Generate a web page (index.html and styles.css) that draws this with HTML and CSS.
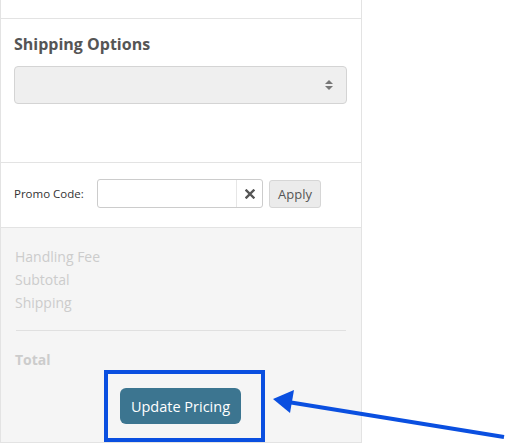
FILE: index.html
```html
<!DOCTYPE html>
<html>
<head>
<meta charset="utf-8">
<link rel="stylesheet" href="styles.css">
</head>
<body>
<div class="cart">
  <div class="sec sec-top"></div>
  <div class="sec sec-ship">
    <h3 class="title">Shipping Options</h3>
    <div class="select">
      <svg class="caret" width="8" height="12" viewBox="0 0 8 12"><path d="M0 5 L4 1 L8 5 Z M0 7 L8 7 L4 11 Z" fill="#777"/></svg>
    </div>
  </div>
  <div class="sec sec-promo">
    <span class="promo-label">Promo Code:</span>
    <div class="input-group">
      <div class="input"></div>
      <div class="clear"><svg width="10" height="10" viewBox="0 0 10 10"><path d="M1.5 1.5 L8.5 8.5 M8.5 1.5 L1.5 8.5" stroke="#555" stroke-width="2.4" stroke-linecap="square"/></svg></div>
    </div>
    <button class="apply">Apply</button>
  </div>
  <div class="sec sec-totals">
    <div class="line">Handling Fee</div>
    <div class="line">Subtotal</div>
    <div class="line">Shipping</div>
    <div class="rule"></div>
    <div class="line total">Total</div>
    <div class="btn-row">
      <div class="highlight">
        <button class="update">Update Pricing</button>
      </div>
    </div>
  </div>
</div>
<svg class="arrow" width="506" height="444" viewBox="0 0 506 444">
  <line x1="504" y1="437" x2="288" y2="402" stroke="#0a4fe0" stroke-width="4"/>
  <path d="M273 399 L294 390 L290 413 Z" fill="#0a4fe0"/>
</svg>
</body>
</html>
```
FILE: styles.css
```css
* { box-sizing: border-box; }
html, body { margin: 0; padding: 0; background: #fff; }
body { font-family: "Open Sans", "Liberation Sans", sans-serif; width: 506px; height: 444px; overflow: hidden; position: relative; }
.cart { width: 362px; border-left: 1px solid #e3e3e3; border-right: 1px solid #e3e3e3; border-bottom: 1px solid #e3e3e3; }
.sec { border-bottom: 1px solid #e3e3e3; }
.sec-top { height: 19px; }
.sec-ship { height: 144px; padding: 14px 14px 0 13px; }
.title { margin: 0; font-size: 16px; font-weight: 700; color: #555; line-height: 22px; }
.select { margin-top: 11px; height: 38px; background: #efefef; border: 1px solid #d4d4d4; border-radius: 4px; display: flex; align-items: center; justify-content: flex-end; padding-right: 13px; }
.sec-promo { height: 65px; padding: 0 13px 3px 13px; display: flex; align-items: center; }
.promo-label { font-size: 11.5px; color: #333; width: 83px; }
.input-group { display: flex; width: 166px; height: 29px; border: 1px solid #ccc; border-radius: 3px; background: #fff; }
.input { flex: 1; }
.clear { width: 26px; border-left: 1px solid #e6e6e6; display: flex; align-items: center; justify-content: center; }
.apply { margin-left: 6px; height: 28px; width: 52px; padding: 0; font-family: inherit; font-size: 13px; color: #555; background: #ebebeb; border: 1px solid #d6d6d6; border-radius: 3px; }
.sec-totals { background: #f5f5f5; height: 214px; padding: 17px 14px 0 14px; border-bottom: none; }
.line { font-size: 14px; line-height: 23px; color: #ccc; }
.rule { height: 1px; background: #e0e0e0; margin: 16px 1px 17px 1px; }
.total { font-weight: 700; }
.btn-row { display: flex; justify-content: flex-start; padding-left: 89px; margin-top: -1px; }
.highlight { border: 4px solid #0a4fe0; width: 161px; height: 72px; display: flex; align-items: flex-start; justify-content: flex-start; padding: 14px 0 0 12px; }
.update { width: 121px; height: 36px; padding: 0; background: #3c7590; color: #fff; font-family: inherit; font-size: 14.5px; font-weight: 500; border: none; border-radius: 6px; }
.arrow { position: absolute; left: 0; top: 0; pointer-events: none; }
```
